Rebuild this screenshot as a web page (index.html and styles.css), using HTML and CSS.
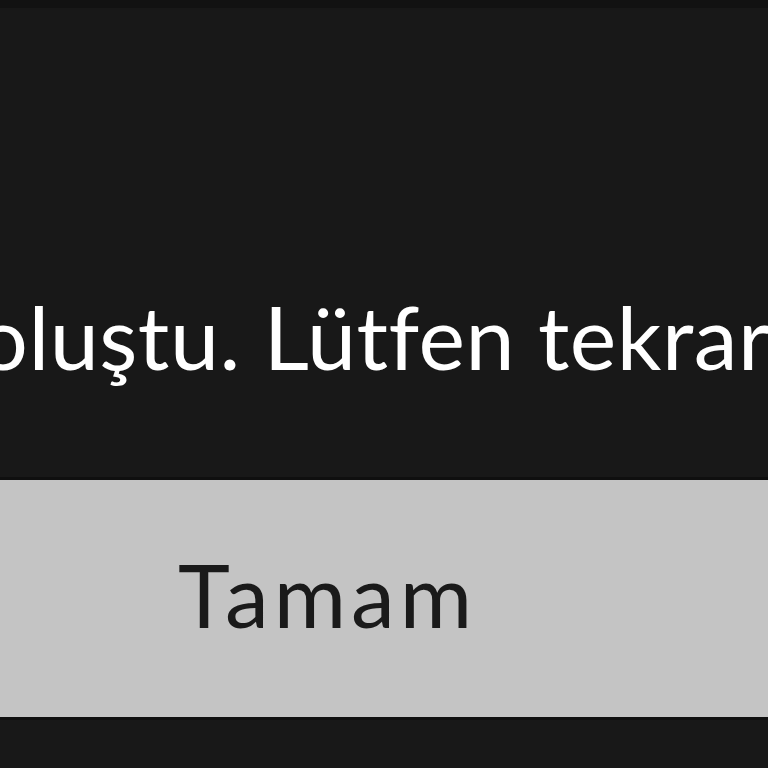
FILE: index.html
```html
<!DOCTYPE html>
<html lang="tr">
<head>
<meta charset="UTF-8" />
<meta name="viewport" content="width=device-width, initial-scale=1" />
<title>Hata</title>
<link rel="stylesheet" href="styles.css">
</head>
<body>
  <div class="topbar"></div>
  <div class="dialog">
    <div class="dialog-body">
      <p class="message">oluştu. Lütfen tekrar deneyin.</p>
    </div>
    <div class="dialog-actions">
      <button class="btn-ok" type="button">Tamam</button>
    </div>
  </div>
</body>
</html>
```

FILE: styles.css
```css
:root {
  --color-bg: #181818;
  --color-edge: #0f0f0f;
  --color-text: #ffffff;
  --color-button: #c4c4c4;
  --color-button-text: #1a1a1a;
  --font-family: 'Lato', 'Noto Sans', 'DejaVu Sans', sans-serif;
}

* {
  box-sizing: border-box;
}

body {
  margin: 0;
  height: 100vh;
  overflow: hidden;
  background: var(--color-bg);
  font-family: var(--font-family);
}

.topbar {
  height: 8px;
  background: #121212;
}

.dialog-body {
  height: 469px;
  overflow: hidden;
  padding-top: 278px;
}

.message {
  margin: 0 0 0 -22px;
  white-space: nowrap;
  font-size: 88px;
  line-height: 100px;
  letter-spacing: 0.5px;
  color: var(--color-text);
}

.dialog-actions {
  border-top: 3px solid var(--color-edge);
  border-bottom: 3px solid var(--color-edge);
}

.btn-ok {
  display: block;
  width: 100%;
  height: 237px;
  margin: 0;
  padding: 0 0 10px 178px;
  border: 0;
  background: var(--color-button);
  color: var(--color-button-text);
  font-family: var(--font-family);
  font-size: 88px;
  letter-spacing: 5px;
  text-align: left;
}
```
